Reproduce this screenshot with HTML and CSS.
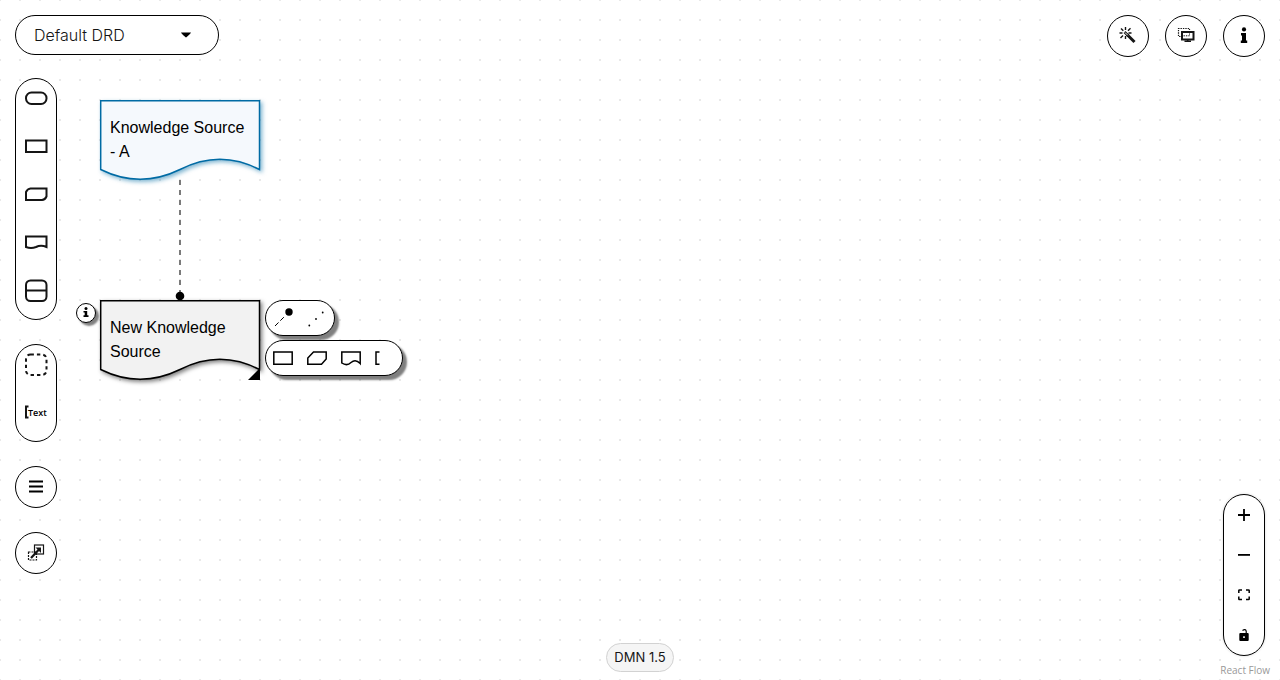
FILE: index.html
```html
<!DOCTYPE html>
<html lang="en">
<head>
<meta charset="utf-8">
<title>DMN Editor</title>
<link rel="stylesheet" href="styles.css">
</head>
<body>
<div class="editor">
  <main class="canvas" aria-label="Diagram">
    <svg class="edge" width="20" height="120" viewBox="0 0 20 120" aria-hidden="true">
      <path d="M10 0V112" stroke="#7a7a7a" stroke-width="2" stroke-dasharray="5 5"/>
      <circle cx="10" cy="116" r="4.3"/>
    </svg>

    <div class="node node-a">
      <svg class="node-shape" width="160" height="80" viewBox="0 0 160 80" aria-hidden="true"><path d="M.7 .7H159.5V69.5Q120 49 80 69.5Q40 89 .7 69.5Z"/></svg>
      <span class="node-label">Knowledge Source - A</span>
    </div>

    <div class="node node-new">
      <svg class="node-shape" width="160" height="80" viewBox="0 0 160 80" aria-hidden="true"><path d="M.7 .7H159.5V69.5Q120 49 80 69.5Q40 89 .7 69.5Z"/></svg>
      <span class="node-label">New Knowledge Source</span>
      <svg class="resize-handle" width="12" height="12" viewBox="0 0 12 12" aria-hidden="true"><path d="M12 0V12H0Z"/></svg>
      <button class="node-info" aria-label="Node info"><svg width="8" height="12" viewBox="0 0 8 12"><circle cx="4" cy="1.6" r="1.5"/><path d="M1.5 4H5.2V8.2H6.5V10H1.5V8.2H2.7V5.6H1.5Z"/></svg></button>
      <div class="node-tools">
        <div class="tool-row">
          <button aria-label="Authority requirement"><svg width="34" height="34" viewBox="0 0 34 34"><path d="M9 25L18 16" stroke="#000" stroke-width="1" stroke-dasharray="5 2.5"/><circle cx="23" cy="11" r="3.7"/></svg></button>
          <button aria-label="Association"><svg width="34" height="34" viewBox="0 0 34 34"><circle cx="9.3" cy="24.5" r=".9"/><circle cx="16" cy="18" r=".9"/><circle cx="22.7" cy="11.5" r=".9"/></svg></button>
        </div>
        <div class="tool-row">
          <button aria-label="Add decision"><svg class="line" width="34" height="34" viewBox="0 0 34 34"><path d="M7.8 11H26.2V23.3H7.8Z"/></svg></button>
          <button aria-label="Add BKM"><svg class="line" width="34" height="34" viewBox="0 0 34 34"><path d="M7.8 23.3V17L13.5 11H26.2V18L21.5 23.3Z"/></svg></button>
          <button aria-label="Add knowledge source"><svg class="line" width="34" height="34" viewBox="0 0 34 34"><path d="M7.8 11H26.2V22.5Q21.5 17.5 17 21.5Q13 25.5 7.8 22Z"/></svg></button>
          <button aria-label="Add text annotation"><svg class="line" width="34" height="34" viewBox="0 0 34 34"><path d="M11.5 11H8V23.3H11.5"/></svg></button>
        </div>
      </div>
    </div>
  </main>

  <div class="overlay">
    <header class="topbar">
      <label class="drd"><select aria-label="DRD"><option>Default DRD</option></select>
        <svg width="10" height="6" viewBox="0 0 10 6" aria-hidden="true"><path d="M0 .5H10Q9.5 1.5 5.7 5.1Q5 5.7 4.3 5.1Q.5 1.5 0 .5Z"/></svg></label>
      <div class="actions">
        <button class="round" aria-label="Autolayout"><svg width="18" height="18" viewBox="0 0 18 18"><path d="M8 7.5L15.5 15" stroke="#151515" stroke-width="3"/><path d="M5.5 5L9.5 9" stroke="#151515" stroke-width="2.6"/><path d="M6 5.5L8.8 8.3" stroke="#fff" stroke-width="1"/><path d="M6.5 0V3M2 1.5L4.3 3.8M0.5 6H3.5M1.5 11L4 8.5M6.5 12V9M11.5 1.2L9 3.7M12.5 6H9.5" stroke="#151515" stroke-width="1.4"/></svg></button>
        <button class="round" aria-label="Overlays"><svg width="18" height="18" viewBox="0 0 18 18" fill="none" stroke="#151515"><path d="M3.5 9.5H1.5V1.5H12.5V3" stroke-width="1.2" stroke-dasharray="1.4 1"/><rect x="5" y="5" width="11.5" height="7.5" stroke-width="2"/><path d="M6.5 8.8H12.5V6.5" stroke-width="1" stroke-dasharray="1.4 1"/><path d="M10.7 12V14M7.5 14.2H14" stroke-width="1.6"/></svg></button>
        <button class="round" aria-label="Properties"><svg width="10" height="18" viewBox="0 0 10 18"><circle cx="5" cy="2.4" r="2.1"/><path d="M2 6H7V13.4H8.2V16H1.8V13.4H3V8.5H2Z"/></svg></button>
      </div>
    </header>

    <div class="middle">
      <aside class="side">
        <div class="pill palette">
          <button aria-label="Input data"><svg class="thick" width="40" height="40" viewBox="0 0 40 40"><rect x="10" y="13.5" width="20.5" height="11.5" rx="5.5"/></svg></button>
          <button aria-label="Decision"><svg class="thick" width="40" height="40" viewBox="0 0 40 40"><rect x="10" y="13.5" width="20.5" height="11.5"/></svg></button>
          <button aria-label="Business knowledge model"><svg class="thick" width="40" height="40" viewBox="0 0 40 40"><path d="M10 25V17Q11.5 13.8 14.5 13.5H30.5V21.5Q29 24.7 26 25Z"/></svg></button>
          <button aria-label="Knowledge source"><svg class="thick" width="40" height="40" viewBox="0 0 40 40"><path d="M10 13.5H30.5V24Q25 21.5 20 24Q15 26 10 24Z"/></svg></button>
          <button aria-label="Decision service"><svg class="thick" width="40" height="40" viewBox="0 0 40 40"><rect x="10" y="9.5" width="20.5" height="20.5" rx="4.5"/><path d="M10 19.5H30"/></svg></button>
        </div>
        <div class="pill palette">
          <button aria-label="Group"><svg class="thick" width="40" height="40" viewBox="0 0 40 40"><rect x="10" y="9.5" width="20.5" height="20.5" rx="4.5" stroke-dasharray="3.4 3"/></svg></button>
          <button aria-label="Text annotation"><svg width="40" height="40" viewBox="0 0 40 40"><path d="M12.5 13.5H10V24.5H12.5" fill="none" stroke="#151515" stroke-width="2"/><text x="12" y="23" class="text-icon">Text</text></svg></button>
        </div>
        <button class="round" aria-label="DRG nodes"><svg width="14" height="14" viewBox="0 0 14 14"><path d="M0 .4H14V2.6H0ZM0 5.4H14V7.6H0ZM0 10.4H14V12.6H0Z"/></svg></button>
        <button class="round" aria-label="External nodes"><svg width="18" height="18" viewBox="0 0 18 18" fill="none" stroke="#151515"><rect x="7.5" y="1" width="9" height="9" stroke-width="1.2"/><rect x="1.5" y="8" width="8" height="8" stroke-width="1.2" stroke-dasharray="2 1"/><path d="M4 14L12 5.5" stroke-width="2.2"/><path d="M8.5 3.5H14V9Z" fill="#151515" stroke="none"/></svg></button>
      </aside>

      <div class="pill controls">
        <button aria-label="Zoom in"><svg width="12" height="12" viewBox="0 0 12 12"><path d="M5.1 0H6.9V5.1H12V6.9H6.9V12H5.1V6.9H0V5.1H5.1Z"/></svg></button>
        <button aria-label="Zoom out"><svg width="12" height="12" viewBox="0 0 12 12"><path d="M0 5H12V6.8H0Z"/></svg></button>
        <button aria-label="Fit view"><svg width="12" height="12" viewBox="0 0 12 12"><path d="M.8 4V1.6Q.8 1 1.5 1H4M8 1H10.5Q11.2 1 11.2 1.6V4M11.2 7.5V10Q11.2 10.6 10.5 10.6H8M4 10.6H1.5Q.8 10.6 .8 10V7.5" fill="none" stroke="#000" stroke-width="1.5"/></svg></button>
        <button aria-label="Toggle interactivity"><svg width="12" height="12" viewBox="0 0 12 12"><path d="M4.5 1.5Q7.5-.5 8.2 2.2V5" fill="none" stroke="#000" stroke-width="1.2"/><path fill-rule="evenodd" d="M2.3 4H9.7Q10.7 4 10.7 5V11Q10.7 12 9.7 12H2.3Q1.3 12 1.3 11V5Q1.3 4 2.3 4ZM5.2 7.2V9H6.8V7.2Z"/></svg></button>
      </div>
    </div>
    <footer class="bottom">
      <span class="version">DMN 1.5</span>
      <a class="credit" href="#">React Flow</a>
    </footer>
  </div>
</div>
</body>
</html>
```
FILE: styles.css
```css
* { box-sizing: border-box; }

body {
  margin: 0;
  font-family: Inter, "Noto Sans", sans-serif;
  color: #151515;
}

button {
  display: flex;
  align-items: center;
  justify-content: center;
  padding: 0;
  border: 0;
  background: none;
  cursor: pointer;
}

svg { display: block; }

.editor {
  position: relative;
  min-height: 100vh;
}

.canvas {
  position: absolute;
  inset: 0;
  overflow: hidden;
  background-color: #fff;
  background-image: conic-gradient(from 90deg at 18px 18px, #e9e9e9 90deg, transparent 90deg);
  background-size: 20px 20px;
  background-position: 1px 1px;
}

.edge { position: absolute; left: 170px; top: 180px; }

.node {
  position: absolute;
  left: 100px;
  width: 160px;
  height: 80px;
  padding: 16px 10px;
  font: 16px/24px "Liberation Sans", Arial, sans-serif;
  color: #000;
}

.node-a { top: 100px; }
.node-new { top: 300px; }

.node-shape {
  position: absolute;
  inset: 0;
  overflow: visible;
  stroke-width: 1.5;
}

.node-a .node-shape {
  fill: #f5f9fd;
  stroke: #006ba4;
  filter: drop-shadow(2px 2px 2px #006ba480);
}

.node-new .node-shape {
  fill: #f2f2f2;
  stroke: #000;
  filter: drop-shadow(2px 2px 2px #00000080);
}

.node-label { position: relative; display: block; }

.resize-handle { position: absolute; right: 0; bottom: 0; }

.node-info {
  position: absolute;
  left: -24px;
  top: 3px;
  width: 20px;
  height: 20px;
  border: 1px solid #000;
  border-radius: 50%;
  background: #fff;
  box-shadow: 3px 3px 2px #00000080;
}

.node-tools {
  position: absolute;
  left: 165px;
  top: 0;
  display: flex;
  flex-direction: column;
  align-items: flex-start;
  gap: 4px;
}

.tool-row {
  display: flex;
  border: 1px solid #000;
  border-radius: 18px;
  background: #fff;
  box-shadow: 4px 4px 2px #00000080;
}

.line { fill: none; stroke: #000; stroke-width: 1.5; }
.thick { fill: none; stroke: #151515; stroke-width: 2; }
.text-icon { font: 600 9px "Open Sans", "Noto Sans", sans-serif; }

.overlay {
  position: relative;
  display: flex;
  flex-direction: column;
  min-height: 100vh;
  padding: 15px 15px 0;
  pointer-events: none;
}

.overlay button, .overlay select, .overlay a { pointer-events: auto; }

.topbar {
  display: flex;
  align-items: flex-start;
  justify-content: space-between;
  margin-bottom: 21px;
}

.drd {
  display: grid;
  align-items: center;
  width: 204px;
}

.drd select {
  grid-area: 1 / 1;
  width: 100%;
  height: 40px;
  padding: 0 18px;
  appearance: none;
  border: 1px solid #000;
  border-radius: 20px;
  background: #fff;
  color: #151515;
  font: 300 16px/24px Inter, "Noto Sans", sans-serif;
}

.drd svg {
  grid-area: 1 / 1;
  justify-self: end;
  margin-right: 28px;
  pointer-events: none;
}

.actions { display: flex; gap: 16px; }

.round {
  width: 42px;
  height: 42px;
  border: 1px solid #000;
  border-radius: 50%;
  background: #fff;
}

.middle {
  flex: 1;
  display: flex;
  align-items: flex-start;
  justify-content: space-between;
}

.side {
  display: flex;
  flex-direction: column;
  gap: 24px;
}

.pill {
  display: flex;
  flex-direction: column;
  border: 1px solid #000;
  border-radius: 21px;
  background: #fff;
}

.pill button { width: 40px; height: 40px; }

.palette { gap: 8px; padding-bottom: 8px; }

.controls {
  align-self: flex-end;
  margin-bottom: -13px;
  box-shadow: 0 0 2px 1px #00000014;
}

.bottom {
  display: grid;
  grid-template-columns: 1fr auto 1fr;
  align-items: end;
  height: 37px;
}

.version {
  grid-column: 2;
  margin-bottom: 8px;
  padding: 3px 7px;
  border: 1px solid #d2d2d2;
  border-radius: 15px;
  background: #f5f5f5;
  font-size: 13px;
  line-height: 21px;
}

.credit {
  justify-self: end;
  margin: 0 -5px 2px 0;
  color: #999;
  font: 10px/15px "Open Sans", "Noto Sans", sans-serif;
  text-decoration: none;
}
```
